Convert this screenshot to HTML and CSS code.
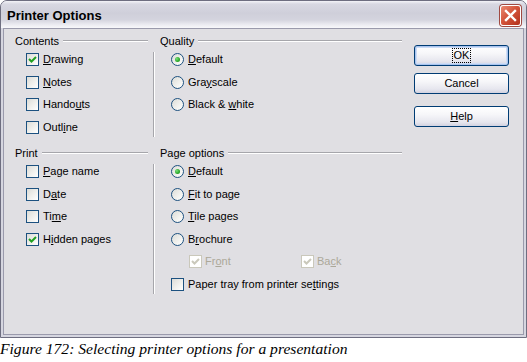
FILE: index.html
```html
<!DOCTYPE html>
<html>
<head>
<meta charset="utf-8">
<link rel="stylesheet" href="styles.css">
</head>
<body>
<div class="window">
  <div class="titlebar">
    <span class="title">Printer Options</span>
    <span class="close"><svg width="13" height="13" viewBox="0 0 13 13"><path d="M2 2 L11 11 M11 2 L2 11" stroke="#fff" stroke-width="2.4" stroke-linecap="square"/></svg></span>
  </div>
  <div class="client">
    <div class="main">
      <section class="group col1">
        <div class="legend"><span>Contents</span><i class="rule"></i></div>
        <div class="items">
          <div class="opt"><span class="cb"><svg class="tick" viewBox="0 0 11 11"><path d="M2 5 L4.5 7.5 L9 3"/></svg></span><span><u>D</u>rawing</span></div>
          <div class="opt"><span class="cb"></span><span><u>N</u>otes</span></div>
          <div class="opt"><span class="cb"></span><span>Hando<u>u</u>ts</span></div>
          <div class="opt"><span class="cb"></span><span>Outl<u>i</u>ne</span></div>
        </div>
      </section>
      <section class="group col2">
        <div class="legend"><span>Quality</span><i class="rule"></i></div>
        <div class="items">
          <div class="opt"><span class="rb on"></span><span><u>D</u>efault</span></div>
          <div class="opt"><span class="rb"></span><span>Gra<u>y</u>scale</span></div>
          <div class="opt"><span class="rb"></span><span>Black &amp; <u>w</u>hite</span></div>
          <div class="opt"></div>
        </div>
      </section>
      <section class="group col1">
        <div class="legend"><span>Print</span><i class="rule"></i></div>
        <div class="items">
          <div class="opt"><span class="cb"></span><span><u>P</u>age name</span></div>
          <div class="opt"><span class="cb"></span><span>D<u>a</u>te</span></div>
          <div class="opt"><span class="cb"></span><span>Ti<u>m</u>e</span></div>
          <div class="opt"><span class="cb"><svg class="tick" viewBox="0 0 11 11"><path d="M2 5 L4.5 7.5 L9 3"/></svg></span><span>H<u>i</u>dden pages</span></div>
        </div>
      </section>
      <section class="group col2">
        <div class="legend"><span>Page options</span><i class="rule"></i></div>
        <div class="items">
          <div class="opt"><span class="rb on"></span><span><u>D</u>efault</span></div>
          <div class="opt"><span class="rb"></span><span><u>F</u>it to page</span></div>
          <div class="opt"><span class="rb"></span><span><u>T</u>ile pages</span></div>
          <div class="opt"><span class="rb"></span><span>B<u>r</u>ochure</span></div>
          <div class="opt sub">
            <div class="subitem front"><span class="cb dis"><svg class="tick" viewBox="0 0 11 11"><path d="M2 5 L4.5 7.5 L9 3"/></svg></span><span class="distext">Fr<u>o</u>nt</span></div>
            <div class="subitem"><span class="cb dis"><svg class="tick" viewBox="0 0 11 11"><path d="M2 5 L4.5 7.5 L9 3"/></svg></span><span class="distext">Ba<u>c</u>k</span></div>
          </div>
          <div class="opt"><span class="cb"></span><span>Paper tray from printer se<u>t</u>tings</span></div>
        </div>
      </section>
    </div>
    <div class="buttons">
      <div class="btn default"><span class="focus">OK</span></div>
      <div class="btn cancel">Cancel</div>
      <div class="btn help"><u>H</u>elp</div>
    </div>
  </div>
</div>
<p class="caption">Figure 172: Selecting printer options for a presentation</p>
</body>
</html>
```
FILE: styles.css
```css
html, body {
  margin: 0;
  padding: 0;
  background: #fff;
}

.window {
  box-sizing: border-box;
  width: 527px;
  height: 338px;
  border: 1px solid #6e6e80;
  border-radius: 7px 7px 0 0;
  background: #d6d6e0;
  display: flex;
  flex-direction: column;
  font-family: "Liberation Sans", Arial, sans-serif;
  font-size: 11px;
  color: #000;
}

.titlebar {
  height: 27px;
  flex: none;
  display: flex;
  align-items: center;
  justify-content: space-between;
  padding: 2px 5px 0 6px;
  box-sizing: border-box;
  border-radius: 6px 6px 0 0;
  background: linear-gradient(to bottom, #f4f4f8 0, #d8d8e2 3px, #cfcfda 45%, #d4d4de 70%, #ececf2 88%, #f8f8fb 100%);
}

.title {
  font-weight: bold;
  font-size: 13px;
  line-height: 16px;
}

.close {
  align-self: flex-start;
  margin-top: 2px;
  width: 21px;
  height: 21px;
  box-sizing: border-box;
  border: 1px solid #fff;
  border-radius: 3px;
  background: linear-gradient(135deg, #e98a72 0, #d4553c 45%, #b3301c 100%);
  box-shadow: 0 0 0 1px #a04a42;
  display: flex;
  align-items: center;
  justify-content: center;
}

.client {
  flex: 1;
  margin: 0 2px 2px;
  border: 1px solid #9a9aac;
  background: #e0dfe3;
  display: flex;
  padding: 5px 0 0 11px;
  gap: 12px;
}

.main {
  display: grid;
  grid-template-columns: 133px 249px;
  column-gap: 5px;
  row-gap: 9.5px;
  align-content: start;
}

.legend {
  display: flex;
  align-items: center;
  height: 14px;
  line-height: 14px;
}

.col2 .legend {
  padding-left: 7px;
}

.rule {
  flex: 1;
  margin-left: 4px;
  border-top: 1px solid #a6a6ab;
  border-bottom: 1px solid #fff;
}

.items {
  margin-top: 4px;
  padding-top: 1px;
  padding-left: 11px;
}

.col2 .items {
  border-left: 1px solid #a6a6ab;
  box-shadow: inset 1px 0 #fff;
  padding-left: 17px;
}

.opt {
  height: 22.5px;
  display: flex;
  align-items: flex-start;
  gap: 4px;
  line-height: 13px;
}

.opt:last-child {
  height: 16px;
}

.cb {
  width: 13px;
  height: 13px;
  box-sizing: border-box;
  border: 1px solid #1c5180;
  background: linear-gradient(135deg, #dcdcd7 0, #f2f2ef 60%, #fff 100%);
  flex: none;
  display: flex;
  align-items: center;
  justify-content: center;
}

.tick {
  width: 11px;
  height: 11px;
  fill: none;
  stroke: #21a121;
  stroke-width: 2;
}

.cb.dis {
  border-color: #cac8bb;
  background: #fff;
}

.cb.dis .tick {
  stroke: #cac8bb;
}

.distext {
  color: #aca899;
}

.rb {
  width: 13px;
  height: 13px;
  box-sizing: border-box;
  border: 1px solid #1c5180;
  border-radius: 50%;
  background: linear-gradient(135deg, #dcdcd7 0, #f2f2ef 60%, #fff 100%);
  flex: none;
  display: flex;
  align-items: center;
  justify-content: center;
}

.rb.on::after {
  content: "";
  width: 5px;
  height: 5px;
  border-radius: 50%;
  background: radial-gradient(circle at 35% 35%, #7ae07a 0, #2aa82a 60%, #1c8c1c 100%);
}

.opt.sub {
  padding-left: 18px;
  gap: 0;
}

.subitem {
  display: flex;
  gap: 3px;
}

.subitem.front {
  width: 112px;
}

.buttons {
  display: flex;
  flex-direction: column;
  padding-top: 11px;
  width: 95px;
}

.btn {
  height: 21px;
  box-sizing: border-box;
  border: 1px solid #003c74;
  border-radius: 3px;
  background: linear-gradient(to bottom, #ffffff 0, #f6f6f9 40%, #e6e6ee 80%, #d2d2e0 100%);
  display: flex;
  align-items: center;
  justify-content: center;
  line-height: 13px;
}

.btn.default {
  box-shadow: inset 0 0 0 1px #a9c4ee, inset 0 0 0 2px #cddcf5;
}

.btn.cancel {
  margin-top: 7px;
}

.btn.help {
  margin-top: 12px;
}

.focus {
  outline: 1px dotted #000;
  padding: 0 1px;
}

.caption {
  margin: 0;
  padding-top: 2px;
  font-family: "Liberation Serif", "Times New Roman", serif;
  font-style: italic;
  font-size: 15.6px;
  line-height: 18px;
}
```
